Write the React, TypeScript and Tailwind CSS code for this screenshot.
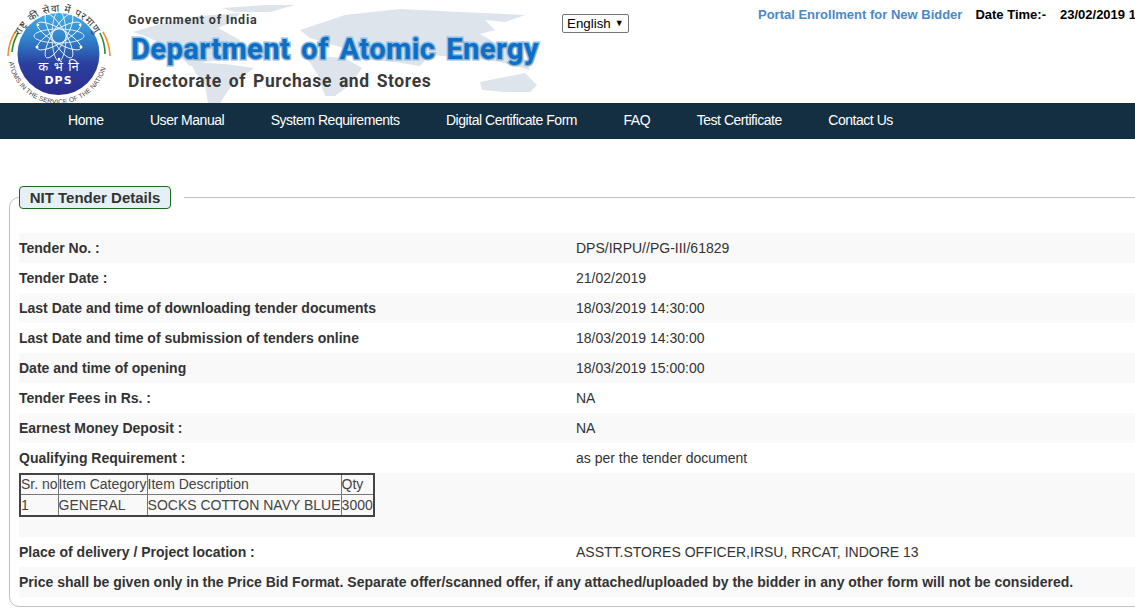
const navItems = [
  "Home",
  "User Manual",
  "System Requirements",
  "Digital Certificate Form",
  "FAQ",
  "Test Certificate",
  "Contact Us",
];

const topRows = [
  ["Tender No. :", "DPS/IRPU//PG-III/61829"],
  ["Tender Date :", "21/02/2019"],
  ["Last Date and time of downloading tender documents", "18/03/2019 14:30:00"],
  ["Last Date and time of submission of tenders online", "18/03/2019 14:30:00"],
  ["Date and time of opening", "18/03/2019 15:00:00"],
  ["Tender Fees in Rs. :", "NA"],
  ["Earnest Money Deposit :", "NA"],
  ["Qualifying Requirement :", "as per the tender document"],
];

function Row({ label, value, striped }: { label: string; value: string; striped: boolean }) {
  return (
    <div className={`flex h-[30px] items-center ${striped ? "bg-[#f9f9f9]" : ""}`}>
      <div className="w-[557px] font-bold">{label}</div>
      <div>{value}</div>
    </div>
  );
}

function Logo() {
  return (
    <svg width="116" height="103" viewBox="0 0 116 103" className="shrink-0">
      <defs>
        <linearGradient id="disc" x1="0" y1="0" x2="0" y2="1">
          <stop offset="0" stopColor="#45aee6" />
          <stop offset="0.35" stopColor="#2f7cc8" />
          <stop offset="0.62" stopColor="#2b3f9e" />
          <stop offset="1" stopColor="#2a2d8c" />
        </linearGradient>
        <path id="arcTop" d="M20 36 A42 42 0 0 1 96 36" />
        <path id="arcBottom" d="M9 62 A49.6 49.6 0 0 0 107 62" />
      </defs>
      <circle cx="58.5" cy="54" r="41" fill="url(#disc)" />
      <g fill="none" stroke="#fff" strokeWidth="0.8">
        <ellipse cx="59" cy="36" rx="7" ry="25" />
        <ellipse cx="59" cy="36" rx="7" ry="25" transform="rotate(30 59 36)" />
        <ellipse cx="59" cy="36" rx="7" ry="25" transform="rotate(60 59 36)" />
        <ellipse cx="59" cy="36" rx="7" ry="25" transform="rotate(90 59 36)" />
        <ellipse cx="59" cy="36" rx="7" ry="25" transform="rotate(120 59 36)" />
        <ellipse cx="59" cy="36" rx="7" ry="25" transform="rotate(150 59 36)" />
      </g>
      <g fill="#fff">
        <circle cx="37" cy="47" r="1.5" />
        <circle cx="81" cy="47" r="1.5" />
        <circle cx="38" cy="25" r="1.3" />
        <circle cx="80" cy="25" r="1.3" />
        <circle cx="59" cy="59" r="1.3" />
      </g>
      <path d="M8 56 A50 50 0 0 1 15 32" fill="none" stroke="#f0922b" strokeWidth="1.6" />
      <path d="M12 52 A46 46 0 0 1 18 33" fill="none" stroke="#2d8a3a" strokeWidth="1.6" />
      <path d="M100 33 A46 46 0 0 1 105 54" fill="none" stroke="#2d8a3a" strokeWidth="1.6" />
      <path d="M103 32 A50 50 0 0 1 110 56" fill="none" stroke="#f0922b" strokeWidth="1.6" />
      <text fontSize="10" fill="#333" fontFamily="'Noto Sans', 'DejaVu Sans', sans-serif">
        <textPath href="#arcTop" textLength="92">राष्ट्र की सेवा में परमाणु</textPath>
      </text>
      <text fontSize="6.6" fill="#444" fontFamily="'Liberation Sans', sans-serif">
        <textPath href="#arcBottom" textLength="134">ATOMS IN THE SERVICE OF THE NATION</textPath>
      </text>
      <text x="58.5" y="71" textAnchor="middle" fontSize="13" wordSpacing="2" fill="#fff" fontFamily="'Noto Sans', sans-serif">
        क भं नि
      </text>
      <text x="58.5" y="84" textAnchor="middle" fontSize="11" letterSpacing="1" fontWeight="700" fill="#fff" fontFamily="'DejaVu Sans', sans-serif">
        DPS
      </text>
    </svg>
  );
}

function WorldMap() {
  return (
    <svg width="420" height="103" viewBox="124 0 420 103" className="absolute left-[124px] top-0">
      <g fill="#dde4ec">
        <path d="M133 32 L160 24 L200 16 L240 13 L232 22 L218 28 L240 40 L232 52 L222 60 L205 62 L190 66 L175 52 L150 38 Z" />
        <path d="M222 8 L265 5 L295 5 L270 12 L235 12 Z" />
        <path d="M190 62 L225 64 L254 68 L232 85 L220 103 L208 103 L205 85 L195 72 Z" />
        <path d="M300 30 L330 20 L345 15 L400 9 L460 12 L525 15 L505 22 L485 20 L495 30 L480 34 L525 60 L530 70 L500 62 L470 58 L430 55 L420 66 L395 62 L370 60 L350 50 L310 38 Z" />
        <path d="M305 55 L345 58 L362 68 L350 85 L335 96 L325 96 L318 75 Z" />
        <path d="M480 82 L500 78 L525 73 L537 85 L530 92 L505 92 L482 90 Z" />
      </g>
    </svg>
  );
}

export default function App() {
  return (
    <div className="h-[609px] w-[1135px] overflow-hidden bg-white font-['Liberation_Sans',Arial,sans-serif] text-[14px] text-[#333]">
      {/* Header */}
      <header className="relative flex h-[103px]">
        <WorldMap />
        <Logo />
        <div className="relative ml-[12px] w-[434px] shrink-0 font-['Roboto',sans-serif] font-bold">
          <div className="mt-[12px] text-[12.5px] leading-[16px] tracking-[0.8px] text-[#3a3a3a]">Government of India</div>
          <div className="mt-[3px] ml-[3px] whitespace-nowrap text-[29px] leading-[36px] tracking-[0.5px] [word-spacing:3px] text-[#0a6fc8] [-webkit-text-stroke:3px_#8dbfe8] [paint-order:stroke_fill] [text-shadow:1px_1px_1px_#9aa6b2]">
            Department of Atomic Energy
          </div>
          <div className="mt-[3px] whitespace-nowrap text-[17.5px] leading-[22px] tracking-[0.6px] [word-spacing:2px] text-[#3a3a3a]">
            Directorate of Purchase and Stores
          </div>
        </div>
        <div className="relative mt-[14px] flex h-[19px] w-[67px] shrink-0 items-center rounded-[2px] border border-[#767676] pl-[4px] text-[13.33px] text-black">
          English
          <span className="ml-[4px] text-[9px]">▼</span>
        </div>
        <div className="relative ml-[129px] mt-[5px] flex h-[16px] shrink-0 items-start whitespace-nowrap text-[13px] font-bold">
          <a className="text-[#4a89c8]">Portal Enrollment for New Bidder</a>
          <span className="ml-[13px] text-black">Date Time:-</span>
          <span className="ml-[14px] text-black">23/02/2019 12:27:15</span>
        </div>
      </header>

      {/* Nav */}
      <nav className="flex h-[36px] items-center gap-[46.5px] bg-[#152f42] pb-[2px] pl-[68px] text-white">
        {navItems.map((item) => (
          <a key={item} className="tracking-[-0.47px]">
            {item}
          </a>
        ))}
      </nav>

      {/* Tender details */}
      <fieldset className="ml-[9px] mt-[47px] w-[1140px] rounded-[10px] border border-[#c0c0c0] pb-[9px] pl-[9px]">
        <legend className="pr-[13px]">
          <span className="block h-[23px] w-[152px] rounded-[4px] border border-[#1c6b1c] bg-[#e4f0f3] text-center text-[15px] font-bold leading-[21px]">
            NIT Tender Details
          </span>
        </legend>
        <div className="mt-[24px]">
          {topRows.map(([label, value], i) => (
            <Row key={label} label={label} value={value} striped={i % 2 === 0} />
          ))}
          <div className="h-[64px] bg-[#f9f9f9]">
            <table className="border-collapse whitespace-nowrap border-2 border-[#444] text-[#444]">
              <tbody>
                <tr className="h-[20px] leading-[18px]">
                  <td className="w-[37px] border border-[#777]">Sr. no</td>
                  <td className="w-[89px] border border-[#777]">Item Category</td>
                  <td className="w-[194px] border border-[#777]">Item Description</td>
                  <td className="w-[33px] border border-[#777]">Qty</td>
                </tr>
                <tr className="h-[22px] leading-[18px]">
                  <td className="border border-[#777]">1</td>
                  <td className="border border-[#777]">GENERAL</td>
                  <td className="border border-[#777]">SOCKS COTTON NAVY BLUE</td>
                  <td className="border border-[#777]">3000</td>
                </tr>
              </tbody>
            </table>
          </div>
          <Row label="Place of delivery / Project location :" value="ASSTT.STORES OFFICER,IRSU, RRCAT, INDORE 13" striped={false} />
          <div className="flex h-[30px] items-center bg-[#f9f9f9] font-bold">
            Price shall be given only in the Price Bid Format. Separate offer/scanned offer, if any attached/uploaded by the bidder in any other form will not be considered.
          </div>
        </div>
      </fieldset>
    </div>
  );
}
